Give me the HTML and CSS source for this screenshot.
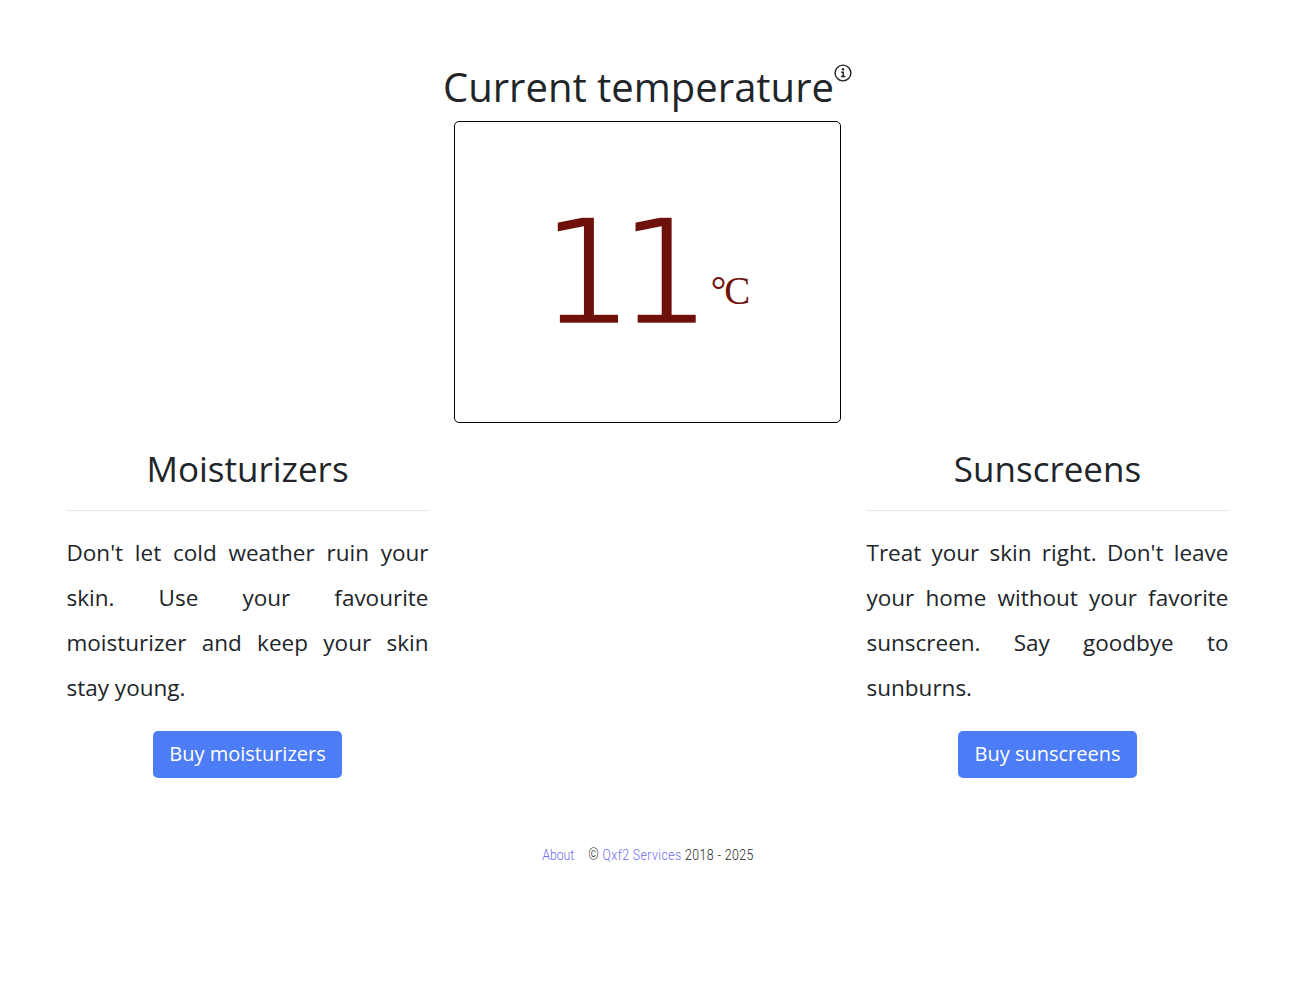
FILE: index.html
```html
<!DOCTYPE html>
<html lang="en">
<head>
<meta charset="utf-8">
<title>Current temperature</title>
<link rel="stylesheet" href="styles.css">
</head>
<body>
<main class="page">
  <header class="heading">
    <h1>Current temperature</h1>
    <svg class="info" viewBox="0 0 18 18" fill="none" stroke="#212529"><circle cx="9" cy="9" r="7.9" stroke-width="1.4"/><path d="M7.2 8.2h2v4.2M7 12.6h4.2" stroke-width="1.5"/><circle cx="9" cy="5.2" r="1.2" fill="#212529" stroke="none"/></svg>
  </header>
  <section class="reading"><span class="degrees">11</span><span class="unit">°C</span></section>
  <div class="products">
    <section class="product">
      <h2>Moisturizers</h2>
      <p>Don't let cold weather ruin your skin. Use your favourite moisturizer and keep your skin stay young.</p>
      <button class="buy">Buy moisturizers</button>
    </section>
    <section class="product">
      <h2>Sunscreens</h2>
      <p>Treat your skin right. Don't leave your home without your favorite sunscreen. Say goodbye to sunburns.</p>
      <button class="buy">Buy sunscreens</button>
    </section>
  </div>
  <footer class="footer"><a class="about">About</a><span class="copy"><span class="mark">©</span> <a>Qxf2 Services</a> 2018 - 2025</span></footer>
</main>
</body>
</html>
```

FILE: styles.css
```css
* { box-sizing: border-box; }
body { margin: 0; background: #fff; color: #212529; font-family: "Open Sans", sans-serif; }
h1, h2, p { margin: 0; font-weight: 400; }
.page { display: flex; flex-direction: column; align-items: center; padding-top: 63px; }
.heading { display: flex; height: 58px; }
h1 { font-size: 40px; line-height: 48px; white-space: nowrap; }
.info { width: 18px; height: 18px; margin-top: 1px; }
.reading { width: 387px; height: 302px; border: 1px solid #000; border-radius: 5px; color: #6e110b; display: flex; align-items: flex-start; padding: 77px 0 0 84px; }
/* A white outline trims the stems to a lighter weight. */
.degrees { font-family: "DejaVu Sans", sans-serif; font-size: 149.5px; line-height: 149px; letter-spacing: -17.3px; -webkit-text-stroke: 4.6px #fff; }
.unit { font-family: "Liberation Serif", serif; font-size: 39px; line-height: 40px; letter-spacing: -2px; margin: 72px 0 0 16px; }
.products { width: 1163px; display: flex; justify-content: space-between; padding-top: 24px; }
.product { width: 363px; display: flex; flex-direction: column; align-items: center; }
h2 { width: 363px; height: 64px; font-size: 35px; line-height: 44px; text-align: center; border-bottom: 1px solid #e5e5e5; }
p { width: 362px; margin-top: 19px; font-size: 22.5px; line-height: 45px; text-align: justify; }
.buy { margin-top: 21px; height: 47px; padding: 0 16px 2px; border: 0; border-radius: 5px; background: #4c7df7; color: #fff; font: 20px/45px "Open Sans", sans-serif; white-space: nowrap; }
.footer { margin-top: 66px; display: flex; gap: 17px; font: 300 15px/22px Roboto, sans-serif; transform: scaleX(.82); }
.footer a { color: #6d6df5; }
.copy { letter-spacing: .5px; }
.mark { font-size: 16px; }
```
